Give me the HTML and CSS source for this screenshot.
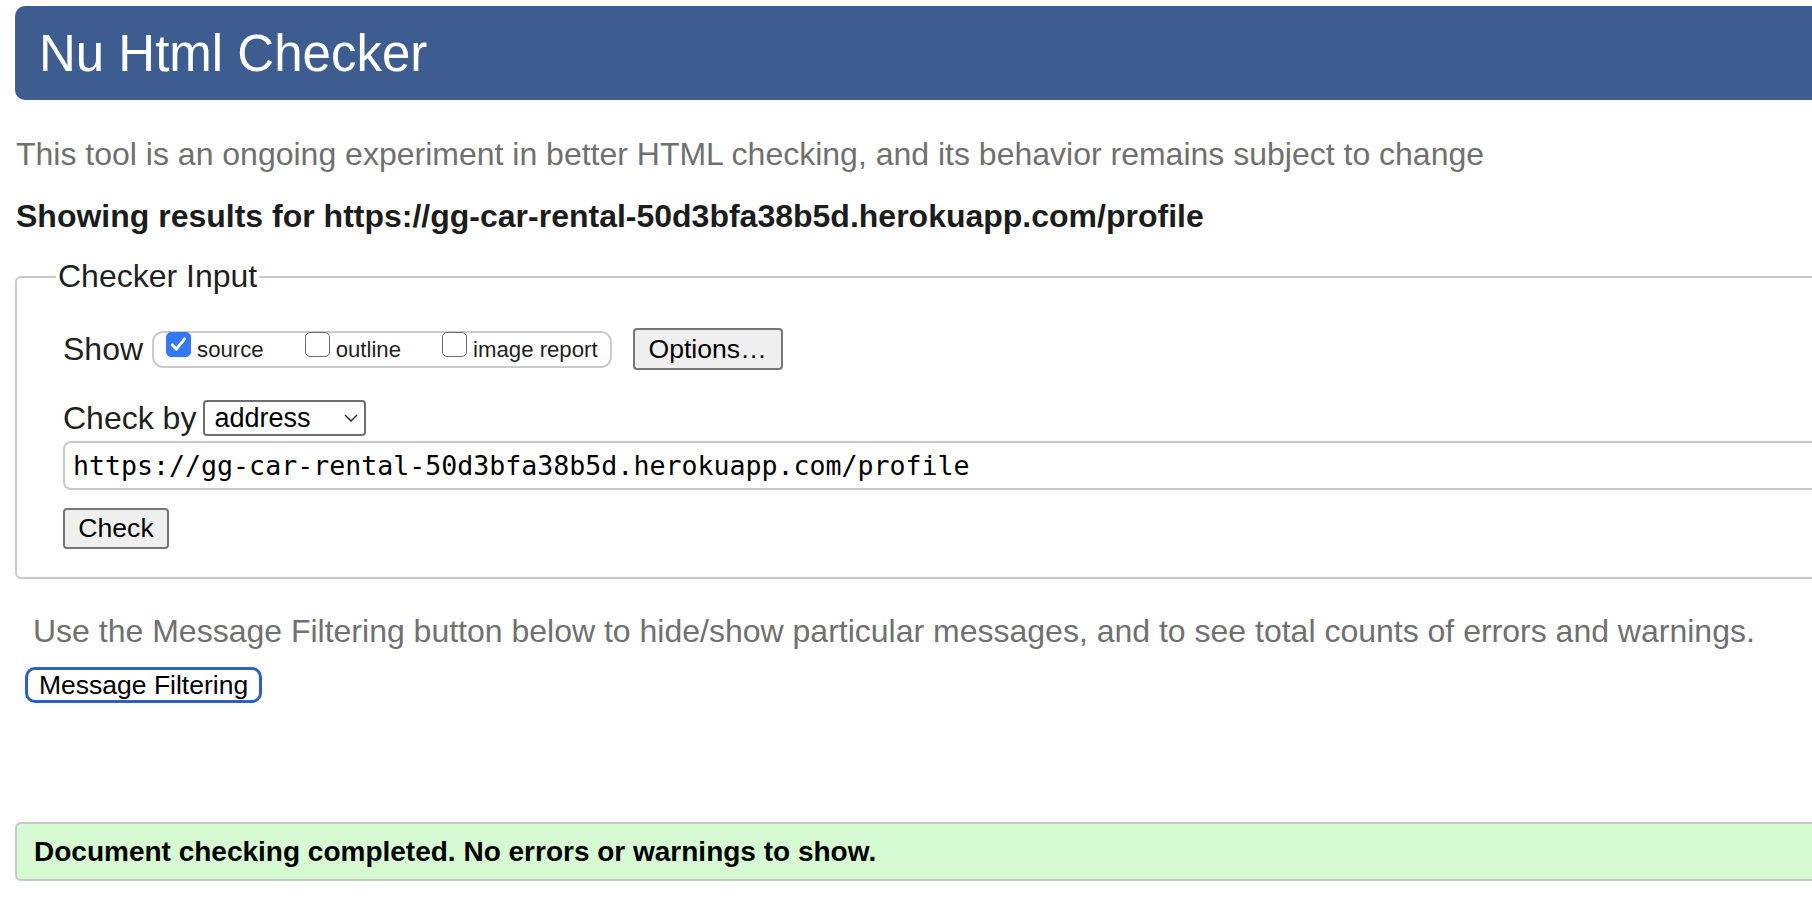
FILE: index.html
```html
<!DOCTYPE html>
<html lang="en">
<head>
<meta charset="utf-8">
<title>Nu Html Checker</title>
<link rel="stylesheet" href="styles.css">
</head>
<body>
<div class="page">
  <header class="banner"><h1>Nu Html Checker</h1></header>
  <p class="intro">This tool is an ongoing experiment in better HTML checking, and its behavior remains subject to change</p>
  <p class="results">Showing results for https://gg-car-rental-50d3bfa38b5d.herokuapp.com/profile</p>
  <fieldset class="checker">
    <legend>Checker Input</legend>
    <div class="show-row">
      <span class="label">Show</span>
      <div class="opts">
        <label class="opt"><span class="box checked"><svg viewBox="0 0 24 24" width="21" height="21"><path d="M5 12.5l4.5 4.8L19 5.5" fill="none" stroke="#fff" stroke-width="3.4" stroke-linecap="round" stroke-linejoin="round"/></svg></span><span class="txt">source</span></label>
        <label class="opt"><span class="box"></span><span class="txt">outline</span></label>
        <label class="opt"><span class="box"></span><span class="txt">image report</span></label>
      </div>
      <button class="btn btn-options">Options…</button>
    </div>
    <div class="by-row">
      <span class="label">Check by</span>
      <span class="select-wrap">
        <select class="select"><option>address</option></select>
        <svg class="chev" viewBox="0 0 14 8" width="14" height="8"><path d="M1 1l6 6 6-6" fill="none" stroke="#222" stroke-width="1.4"/></svg>
      </span>
    </div>
    <div class="url">https://gg-car-rental-50d3bfa38b5d.herokuapp.com/profile</div>
    <button class="btn btn-check">Check</button>
  </fieldset>
  <p class="filter-note">Use the Message Filtering button below to hide/show particular messages, and to see total counts of errors and warnings.</p>
  <button class="btn-filter">Message Filtering</button>
  <div class="success">Document checking completed. No errors or warnings to show.</div>
</div>
</body>
</html>
```
FILE: styles.css
```css
html, body {
  margin: 0;
  padding: 0;
  overflow: hidden;
  background: #fff;
}
body {
  font-family: "Liberation Sans", Arial, sans-serif;
  font-size: 32px;
  color: #1f1f1f;
}
.page {
  width: 2100px;
  padding: 6px 0 0 15px;
  display: flex;
  flex-direction: column;
  align-items: flex-start;
}
.banner {
  align-self: stretch;
  height: 94px;
  background: #3d5d91;
  border-radius: 10px;
  display: flex;
  align-items: center;
}
.banner h1 {
  margin: 0 0 0 24px;
  font-size: 51px;
  font-weight: normal;
  color: #fff;
  line-height: 1;
}
.intro {
  margin: 36px 0 0 1px;
  line-height: 37px;
  color: #707070;
}
.results {
  margin: 25px 0 0 1px;
  line-height: 37px;
  font-weight: bold;
  color: #1c1c1c;
}
.checker {
  align-self: stretch;
  margin: 23px 0 0 0;
  padding: 33px 0 28px 46px;
  border: 2px solid #c9c9c9;
  border-radius: 6px;
}
.checker legend {
  padding: 0 2px;
  margin-left: -7px;
  line-height: 37px;
  color: #1f1f1f;
}
.label {
  color: #1f1f1f;
}
.show-row {
  display: flex;
  align-items: center;
  height: 42px;
}
.opts {
  margin-left: 9px;
  display: flex;
  align-items: center;
  height: 33px;
  padding: 0 12px 0 12px;
  border: 2px solid #cbcbcb;
  border-radius: 11px;
  font-size: 22.2px;
  gap: 41px;
}
.opt {
  display: block;
  line-height: 22px;
  white-space: nowrap;
  position: relative;
  top: -3px;
}
.txt {
  margin-left: 6px;
}
.box {
  display: inline-block;
  vertical-align: baseline;
  overflow: hidden;
  width: 23px;
  height: 23px;
  border: 1.5px solid #6c6c6c;
  border-radius: 5px;
  background: #fff;
}
.box svg {
  display: block;
  margin: 1px auto 0;
}
.box.checked {
  background: #3478f6;
  border-color: #3478f6;
}
.btn {
  font-family: "Liberation Sans", Arial, sans-serif;
  font-size: 26.6px;
  color: #000;
  background: #efefef;
  border: 2px solid #767676;
  border-radius: 4px;
  padding: 0;
  line-height: 1;
}
.btn-options {
  margin-left: 21px;
  width: 150px;
  height: 42px;
}
.by-row {
  margin-top: 30px;
  display: flex;
  align-items: center;
  height: 36px;
}
.select-wrap {
  position: relative;
  margin-left: 7px;
  display: inline-flex;
}
.select {
  appearance: none;
  -webkit-appearance: none;
  font-family: "Liberation Sans", Arial, sans-serif;
  font-size: 27px;
  color: #000;
  width: 163px;
  height: 36px;
  padding: 0 0 0 9px;
  border: 2px solid #6f6f6f;
  border-radius: 4px;
  background: #fff;
  line-height: 1;
}
.chev {
  position: absolute;
  right: 8px;
  top: 14px;
  pointer-events: none;
}
.url {
  margin-top: 5px;
  height: 49px;
  box-sizing: border-box;
  border: 2px solid #c9c9c9;
  border-right: none;
  border-radius: 8px 0 0 8px;
  padding-left: 8px;
  display: flex;
  align-items: center;
  font-family: "DejaVu Sans Mono", "Liberation Mono", monospace;
  font-size: 26.6px;
  color: #000;
}
.btn-check {
  margin-top: 18px;
  width: 106px;
  height: 41px;
  display: block;
}
.filter-note {
  margin: 34px 0 0 18px;
  line-height: 37px;
  color: #707070;
}
.btn-filter {
  margin: 17px 0 0 10px;
  height: 36px;
  padding: 0 11px 0 11px;
  background: #fff;
  border: 3px solid #2f5fc5;
  border-radius: 10px;
  font-family: "Liberation Sans", Arial, sans-serif;
  font-size: 26.5px;
  color: #000;
  line-height: 1;
}
.success {
  align-self: stretch;
  margin-top: 119px;
  height: 59px;
  box-sizing: border-box;
  background: #d6fbd3;
  border: 2px solid #c9c9c9;
  border-radius: 6px;
  padding-left: 17px;
  display: flex;
  align-items: center;
  font-size: 28px;
  font-weight: bold;
  color: #000;
}
```
